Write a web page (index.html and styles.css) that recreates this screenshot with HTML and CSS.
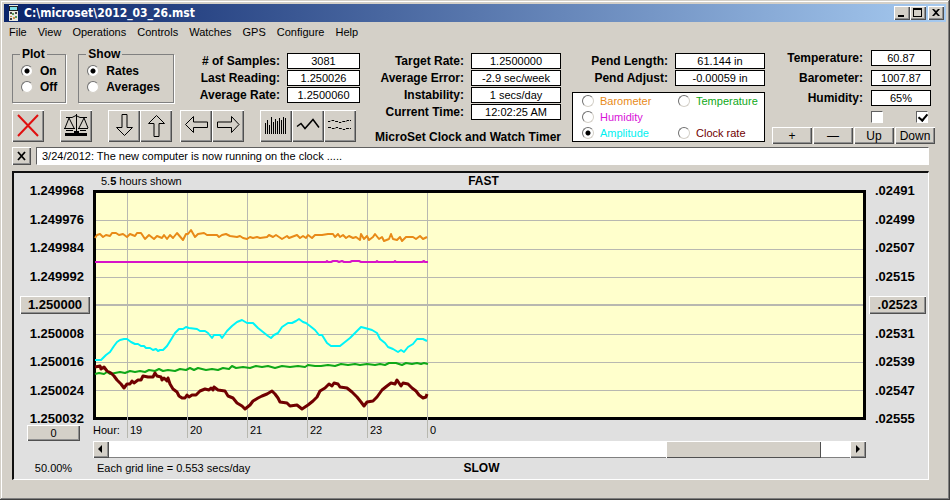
FILE: index.html
```html
<!DOCTYPE html>
<html lang="en">
<head>
<meta charset="utf-8">
<title>C:\microset\2012_03_26.mst</title>
<link rel="stylesheet" href="styles.css">
</head>
<body>
<div class="window">
  <header class="titlebar">
    <svg class="app-icon" viewBox="0 0 16 16" aria-hidden="true">
      <rect x="1" y="0" width="9" height="16" fill="#e8e8e0"/>
      <rect x="1" y="1" width="9" height="5" fill="#222"/>
      <rect x="2" y="2" width="7" height="3" fill="#7ee0e8"/>
      <path d="M2 7h2v2h-2zM7 7h2v2h-2zM2 13h2v2h-2z" fill="#444"/>
      <path d="M4 8h2v2h-2zM7 11h2v2h-2z" fill="#5a9a5a"/>
      <path d="M2 11h2v1h-2zM5 12h2v2h-2z" fill="#d09050"/>
    </svg>
    <h1>C:\microset\2012_03_26.mst</h1>
    <div class="window-buttons">
      <button type="button" aria-label="Minimize"><svg viewBox="0 0 16 14"><path d="M4 9h6v2H4z"/></svg></button>
      <button type="button" aria-label="Maximize"><svg viewBox="0 0 16 14"><path d="M3 2h9v9H3zM4 4v6h7V4z" fill-rule="evenodd"/></svg></button>
      <button type="button" class="close" aria-label="Close"><svg viewBox="0 0 16 14"><path d="M4 3h2l2 2 2-2h2L9 6.500 12 10h-2L8 8l-2 2H4l3-3.500z"/></svg></button>
    </div>
  </header>
  <nav class="menu">
    <a href="#file">File</a><a href="#view">View</a><a href="#operations">Operations</a><a href="#controls">Controls</a><a href="#watches">Watches</a><a href="#gps">GPS</a><a href="#configure">Configure</a><a href="#help">Help</a>
  </nav>

  <section class="controls">
    <div class="left">
      <div class="left-top">
        <fieldset>
          <legend>Plot</legend>
          <label><input type="radio" name="plot" checked>On</label>
          <label><input type="radio" name="plot">Off</label>
        </fieldset>
        <fieldset class="show">
          <legend>Show</legend>
          <label><input type="radio" name="show" checked>Rates</label>
          <label><input type="radio" name="show">Averages</label>
        </fieldset>
        <div class="fields samples">
          <label for="samples"># of Samples:</label><input id="samples" value="3081" readonly>
          <label for="last">Last Reading:</label><input id="last" value="1.250026" readonly>
          <label for="avg">Average Rate:</label><input id="avg" value="1.2500060" readonly>
        </div>
      </div>
      <div class="tools">
        <div><button type="button" aria-label="Stop"><svg viewBox="0 0 32 32"><path class="stop" d="M6 5 26 26M26 5 6 26"/></svg></button></div>
        <div><button type="button" aria-label="Balance"><svg viewBox="0 0 32 32"><path d="M6 7.500h6l4-2 4 2h7M16.500 4v18M9 8l-4 10M9 8l5 10M24 8l-5 10M24 8l4 10M4 18.500h11M18 18.500h10M6 20.500h7M20 20.500h6"/><path class="solid" d="M14 21h5v2h8v3H5v-3h9z"/></svg></button></div>
        <div><button type="button" aria-label="Down"><svg viewBox="0 0 32 32"><path d="M14 4.500h5v13h5.500L16.500 25.500 8.500 17.500H14z"/></svg></button><button type="button" aria-label="Up"><svg viewBox="0 0 32 32"><path d="M14 26.500h5v-13h5.500L16.500 5.500 8.500 13.500H14z"/></svg></button></div>
        <div><button type="button" aria-label="Left"><svg viewBox="0 0 32 32"><path d="M27.500 12v5.500h-14v5L5.500 14.500l8-8V12z"/></svg></button><button type="button" aria-label="Right"><svg viewBox="0 0 32 32"><path d="M5.500 12v5.500h14v5l7.500-8-7.500-8V12z"/></svg></button></div>
        <div><button type="button" aria-label="Bar plot"><svg viewBox="0 0 32 32"><path d="M5.500 24V13M7.500 24V10M9.500 24V15M11.500 24V7M13.500 24V12M15.500 24V9M17.500 24V11M19.500 24V8M21.500 24V10M23.500 24V7M25.500 24V8"/></svg></button><button type="button" aria-label="Line plot"><svg viewBox="0 0 32 32"><path d="M5 16.500l4-3 4 5 8-9 6 8" stroke-width="1.500"/></svg></button><button type="button" aria-label="Dual plot"><svg viewBox="0 0 32 32"><path d="M4 11.500h2l1-1h3l1 1h3l1 1h2l1-1h4l1-1h4M4 17.500h3l1 1h3l1-1h2l1 1h3l1 1h2l1-1h5" stroke-dasharray="3 1"/></svg></button></div>
      </div>
    </div>

    <div class="middle">
      <div class="fields">
        <label for="target">Target Rate:</label><input id="target" value="1.2500000" readonly>
        <label for="error">Average Error:</label><input id="error" value="-2.9 sec/week" readonly>
        <label for="instability">Instability:</label><input id="instability" value="1 secs/day" readonly>
        <label for="time">Current Time:</label><input id="time" value="12:02:25 AM" readonly>
      </div>
      <p>MicroSet Clock and Watch Timer</p>
    </div>

    <div class="pendulum">
      <div class="fields">
        <label for="length">Pend Length:</label><input id="length" value="61.144 in" readonly>
        <label for="adjust">Pend Adjust:</label><input id="adjust" value="-0.00059 in" readonly>
      </div>
      <div class="series">
        <label class="orange"><input type="radio" name="series">Barometer</label>
        <label class="green"><input type="radio" name="series">Temperature</label>
        <label class="magenta"><input type="radio" name="series">Humidity</label>
        <span></span>
        <label class="cyan"><input type="radio" name="series" checked>Amplitude</label>
        <label class="maroon"><input type="radio" name="series">Clock rate</label>
      </div>
    </div>

    <div class="climate">
      <div class="fields">
        <label for="temperature">Temperature:</label><input id="temperature" value="60.87" readonly>
        <label for="barometer">Barometer:</label><input id="barometer" value="1007.87" readonly>
        <label for="humidity">Humidity:</label><input id="humidity" value="65%" readonly>
      </div>
      <div class="checks"><input type="checkbox" aria-label="Left trace"><input type="checkbox" aria-label="Right trace" checked></div>
      <div class="adjust"><button type="button">+</button><button type="button">—</button><button type="button">Up</button><button type="button">Down</button></div>
    </div>
  </section>

  <div class="note">
    <button type="button" aria-label="Clear note"><svg viewBox="0 0 19 18"><path d="M6 5l7 8M13 5l-7 8" stroke="#000" stroke-width="1.800"/></svg></button>
    <input type="text" aria-label="Note" value="3/24/2012: The new computer is now running on the clock .....">
  </div>

  <main class="panel">
    <div class="top"><span>5.<b>5</b> hours shown</span><strong>FAST</strong></div>
    <div class="axis rate">
      <span>1.249968</span><span>1.249976</span><span>1.249984</span><span>1.249992</span>
      <button type="button">1.250000</button>
      <span>1.250008</span><span>1.250016</span><span>1.250024</span><span>1.250032</span>
    </div>
    <div class="plot">
      <svg viewBox="93 190 773 230" preserveAspectRatio="none" role="img" aria-label="Clock plot">
        <rect x="94.500" y="191.500" width="770" height="227" fill="#ffffcc" stroke="#000" stroke-width="3"/>
        <path class="grid" d="M96 220.500H863M96 249.500H863M96 277.500H863M96 334.500H863M96 362.500H863M96 390.500H863M127.500 193V438M187.500 193V438M247.500 193V438M307.500 193V438M367.500 193V438M427.500 193V438"/>
        <path class="grid mid" d="M96 305H863"/>
        <polyline stroke="#e88a18" points="95,238 97,235 100,234 103,237 106,235 110,236 112,233 116,233 119,235 123,234 127,237 130,234 135,236 137,233 141,233 145,239 149,235 154,239 157,236 162,238 164,235 167,239 170,235 173,238 177,233 183,240 186,234 188,234 191,230 195,237 198,234 204,233 207,235 217,235 219,237 222,235 226,234 230,236 237,237 240,236 243,238 247,239 250,237 253,238 257,237 260,238 267,237 269,235 273,237 276,235 279,237 282,239 287,236 289,238 297,235 300,238 303,236 306,238 308,235 312,238 315,235 322,235 328,234 333,234 335,237 338,234 340,237 343,235 346,238 349,236 353,238 356,237 360,240 361,234 364,239 367,236 369,240 373,237 375,234 379,239 382,237 384,241 389,239 391,234 393,239 397,240 400,237 402,241 406,237 413,237 416,239 420,236 423,239 425,238 427,237"/>
        <polyline stroke="#d813c8" points="95,262 326,262 327,261 328,262 331,262 333,261 337,261 339,262 342,261 344,262 350,262 352,261 359,261 361,262 376,262 377,261 378,262 394,262 395,261 396,262 422,262 424,261 425,262 428,262"/>
        <polyline stroke="#00f4f8" points="95,360 101,360 106,355 110,352 114,346 117,342 120,340 124,339 127,339 131,342 135,344 138,344 141,346 144,346 146,348 150,348 153,350 156,349 158,351 160,350 163,350 167,346 172,338 175,333 179,329 183,329 186,327 189,328 197,329 200,331 205,331 208,333 212,338 214,335 220,335 222,338 227,331 232,326 237,322 242,320 247,323 253,323 258,328 263,332 268,336 271,338 274,335 278,333 282,327 288,323 292,323 296,321 299,319 303,322 306,323 310,326 315,330 319,335 322,335 327,343 331,346 340,346 345,342 350,338 353,335 357,331 361,327 365,328 372,330 377,333 380,339 385,343 388,347 393,349 398,352 401,350 404,352 408,347 413,344 417,339 423,339 427,341"/>
        <polyline stroke="#10a818" points="95,374 99,373 104,374 107,372 110,374 115,373 120,372 125,373 130,371 135,372 140,371 145,372 149,370 155,371 159,369 163,371 168,370 175,371 180,369 186,370 190,368 194,370 198,368 202,369 206,370 212,369 218,370 223,368 229,369 232,366 236,368 243,367 250,368 256,366 262,367 268,366 275,368 282,366 290,367 298,366 305,367 308,365 315,366 321,366 328,365 335,366 341,364 348,365 355,364 360,365 367,364 375,365 380,364 385,365 389,363 396,363 402,365 406,363 412,364 417,363 421,364 424,363 428,364"/>
        <polyline class="rate-line" points="95,367 100,366 101,369 104,367 107,371 111,373 114,376 117,380 121,384 124,388 127,384 130,384 132,381 134,383 138,380 141,380 143,376 148,377 153,377 155,373 157,376 161,377 162,380 164,378 167,381 168,378 170,384 173,389 177,392 179,396 182,398 185,398 187,395 189,397 192,395 196,395 200,391 205,389 209,390 211,388 213,390 214,387 218,390 225,391 228,396 233,398 237,403 242,406 245,409 250,405 253,401 258,398 262,396 267,394 272,391 275,394 278,398 280,402 287,403 290,406 297,405 302,409 308,405 313,401 317,397 320,391 325,388 329,384 332,386 334,383 338,384 340,387 347,388 352,392 357,397 361,402 364,406 367,402 373,401 377,397 382,390 387,386 391,383 395,384 397,380 401,386 403,383 408,384 412,388 416,391 419,395 423,398 426,397 427,394"/>
      </svg>
    </div>
    <div class="axis amplitude">
      <span>.02491</span><span>.02499</span><span>.02507</span><span>.02515</span>
      <button type="button">.02523</button>
      <span>.02531</span><span>.02539</span><span>.02547</span><span>.02555</span>
    </div>
    <div class="zero"><button type="button">0</button></div>
    <div class="hours"><span>Hour:</span><span>19</span><span>20</span><span>21</span><span>22</span><span>23</span><span>0</span></div>
    <div class="scroll">
      <button type="button" aria-label="Scroll left"><svg viewBox="0 0 16 17"><path d="M9 4v8L5 8z"/></svg></button>
      <input type="range" min="0" max="100" value="95" aria-label="Time position">
      <button type="button" aria-label="Scroll right"><svg viewBox="0 0 16 17"><path d="M6 4v8l4-4z"/></svg></button>
    </div>
    <div class="percent">50.00%</div>
    <div class="bottom"><span>Each grid line = 0.553 secs/day</span><strong>SLOW</strong></div>
  </main>
</div>
</body>
</html>
```
FILE: styles.css
```css
* { box-sizing: border-box; }

body {
  margin: 0;
  font: 11px/16px "Liberation Sans", sans-serif;
  color: #000;
}

button, input {
  margin: 0;
  padding: 0;
  font: inherit;
  color: inherit;
}

button {
  background: #d4d0c8;
  border: 0;
  border-radius: 0;
  box-shadow: inset 1px 1px #fff, inset -1px -1px #505050, inset -2px -2px #909090;
}

button svg { display: block; width: 100%; }

.window {
  display: flex;
  flex-direction: column;
  min-height: 100vh;
  padding: 4px;
  background: #d4d0c8;
  box-shadow: inset -1px -1px #404040, inset 1px 1px #d4d0c8, inset -2px -2px #808080, inset 2px 2px #fff;
}

.titlebar {
  display: flex;
  align-items: center;
  height: 18px;
  padding: 0 2px 0 4px;
  background: linear-gradient(90deg, #0a246a, #a6caf0);
}

.app-icon { width: 16px; height: 16px; }

.titlebar h1 {
  flex: 1;
  margin: 0;
  font: bold 12px/18px "DejaVu Sans Condensed", "DejaVu Sans", sans-serif;
  color: #fff;
}

.window-buttons { display: flex; }
.window-buttons button { width: 16px; height: 14px; }
.window-buttons .close { margin-left: 2px; }

.menu {
  display: flex;
  gap: 11px;
  height: 20px;
  padding: 0 5px;
  line-height: 20px;
}

.menu a { color: #000; text-decoration: none; }

.controls {
  display: flex;
  gap: 7px;
  height: 98px;
  margin: 4px 11px 0 8px;
}

.left, .middle, .pendulum, .climate {
  display: flex;
  flex-direction: column;
  justify-content: space-between;
}

.left-top { display: flex; gap: 12px; width: 348px; }

fieldset {
  width: 52px;
  height: 57px;
  margin: 0;
  padding: 1px 8px 0;
  border: 1px solid #808080;
  box-shadow: 1px 1px #fff;
  font-size: 12px;
  font-weight: bold;
}

fieldset.show { width: 96px; }
legend { padding: 0 2px; line-height: 16px; margin-left: -1px; }
fieldset label { display: flex; align-items: center; gap: 7px; height: 16px; }

input[type="radio"] {
  appearance: none;
  flex: none;
  width: 12px;
  height: 12px;
  border: 1px solid;
  border-color: #707070 #d4d0c8 #d4d0c8 #707070;
  border-radius: 50%;
  background: #fff;
}

input[type="radio"]:checked { background: radial-gradient(circle, #000 2px, #fff 3px); }

.fields {
  display: grid;
  grid-template-columns: 1fr 90px;
  gap: 1px 7px;
  padding-top: 7px;
}

.fields label {
  font-size: 12px;
  font-weight: bold;
  text-align: right;
  white-space: nowrap;
}

.fields input {
  width: 100%;
  height: 16px;
  border: 1px solid #000;
  background: #fff;
  text-align: center;
}

.samples { grid-template-columns: 1fr 73px; flex: 1; }
.left { flex: 1; padding-bottom: 2px; }

.tools { display: flex; gap: 16px; }
.tools div { display: flex; }
.tools div:nth-child(4) { margin-left: -8px; }
.tools button { width: 32px; height: 32px; }
.tools path { fill: none; stroke: #000; }
.tools .solid { fill: #000; stroke: none; }
.tools .stop { stroke: #e01010; stroke-width: 2px; }

.middle { width: 188px; margin-right: 4px; }
.middle p { margin: 0; font-size: 12px; line-height: 14px; font-weight: bold; text-align: right; white-space: nowrap; }

.pendulum { width: 193px; padding-bottom: 2px; }

.series {
  display: grid;
  grid-template-columns: 96px 1fr;
  padding: 0 0 0 9px;
  border: 1px solid #000;
  background: #fff;
}

.series label { display: flex; align-items: center; gap: 6px; }
.orange { color: #e88a18; }
.green { color: #10a818; }
.magenta { color: #d813d8; }
.cyan { color: #00f0f0; }
.maroon { color: #700000; }

.climate { width: 163px; }
.climate .fields { grid-template-columns: 1fr 60px; gap: 4px 8px; padding: 4px 4px 0 0; }

.checks { display: flex; justify-content: flex-end; gap: 33px; padding-right: 7px; }

.checks input {
  appearance: none;
  position: relative;
  width: 12px;
  height: 12px;
  border: 1px solid;
  border-color: #606060 #fff #fff #606060;
  background: #fff;
}

.checks input:checked::after {
  content: "";
  position: absolute;
  left: 3px;
  top: 0;
  width: 4px;
  height: 7px;
  border: solid #000;
  border-width: 0 2px 2px 0;
  transform: rotate(40deg);
}

.adjust { display: grid; grid-template-columns: repeat(4, 1fr); gap: 1px; font-size: 12px; }
.adjust button { height: 17px; }

.note { display: flex; gap: 5px; margin: 3px 17px 0 8px; }
.note button { width: 19px; height: 18px; }

.note input {
  flex: 1;
  height: 18px;
  padding: 0 5px;
  border: 1px solid;
  border-color: #606060 #fff #fff #606060;
  background: #fff;
}

.panel {
  display: grid;
  flex: 1;
  grid-template-columns: 79px 1fr 62px;
  grid-template-rows: 17px minmax(120px, 1fr) 21px 17px 21px;
  margin: 6px 17px 16px 8px;
  border: 2px solid #101010;
  border-right: 1px solid #fff;
  border-bottom: 1px solid #fff;
  background: #e0e0e0;
}

.top, .bottom {
  display: grid;
  grid-column: 2;
  grid-template-columns: 1fr auto 1fr;
  line-height: 17px;
  padding-left: 4px;
}

.top { padding-left: 8px; }
.bottom { line-height: 21px; }
.top strong, .bottom strong { font-size: 12px; }

.axis {
  display: flex;
  flex-direction: column;
  justify-content: space-between;
  margin: -8px 0;
  font-size: 13px;
  line-height: 18px;
  font-weight: bold;
}

.axis button { flex: none; height: 18px; }
.rate { grid-column: 1; padding: 0 3px 0 6px; }
.rate span { padding-right: 6px; text-align: right; }
.amplitude { padding: 0 2px 0 3px; }
.amplitude span { padding-left: 6px; }

.plot svg { display: block; width: 100%; height: 0; min-height: 100%; overflow: visible; }
.plot .grid { fill: none; stroke: #b8b8b0; stroke-width: 1; }
.plot .grid.mid { stroke-width: 2; }
.plot polyline { fill: none; stroke-width: 2; stroke-linejoin: round; }
.plot .rate-line { stroke: #700000; stroke-width: 3; }

.zero { grid-column: 1; padding: 5px 13px 0 13px; }
.zero button { display: block; width: 100%; height: 16px; }

.hours {
  display: grid;
  grid-template-columns: 37fr 60fr 60fr 60fr 60fr 60fr 436fr;
  line-height: 21px;
}

.scroll { display: flex; grid-column: 2; }
.scroll button { width: 16px; height: 17px; }

.scroll input {
  appearance: none;
  flex: 1;
  min-width: 0;
  height: 17px;
  background: #fff;
  border-bottom: 1px solid #808080;
}

.scroll input::-webkit-slider-thumb {
  appearance: none;
  width: 155px;
  height: 17px;
  background: #d4d0c8;
  box-shadow: inset 1px 1px #fff, inset -1px -1px #505050;
}

.percent { grid-column: 1; line-height: 21px; text-align: center; }
```
